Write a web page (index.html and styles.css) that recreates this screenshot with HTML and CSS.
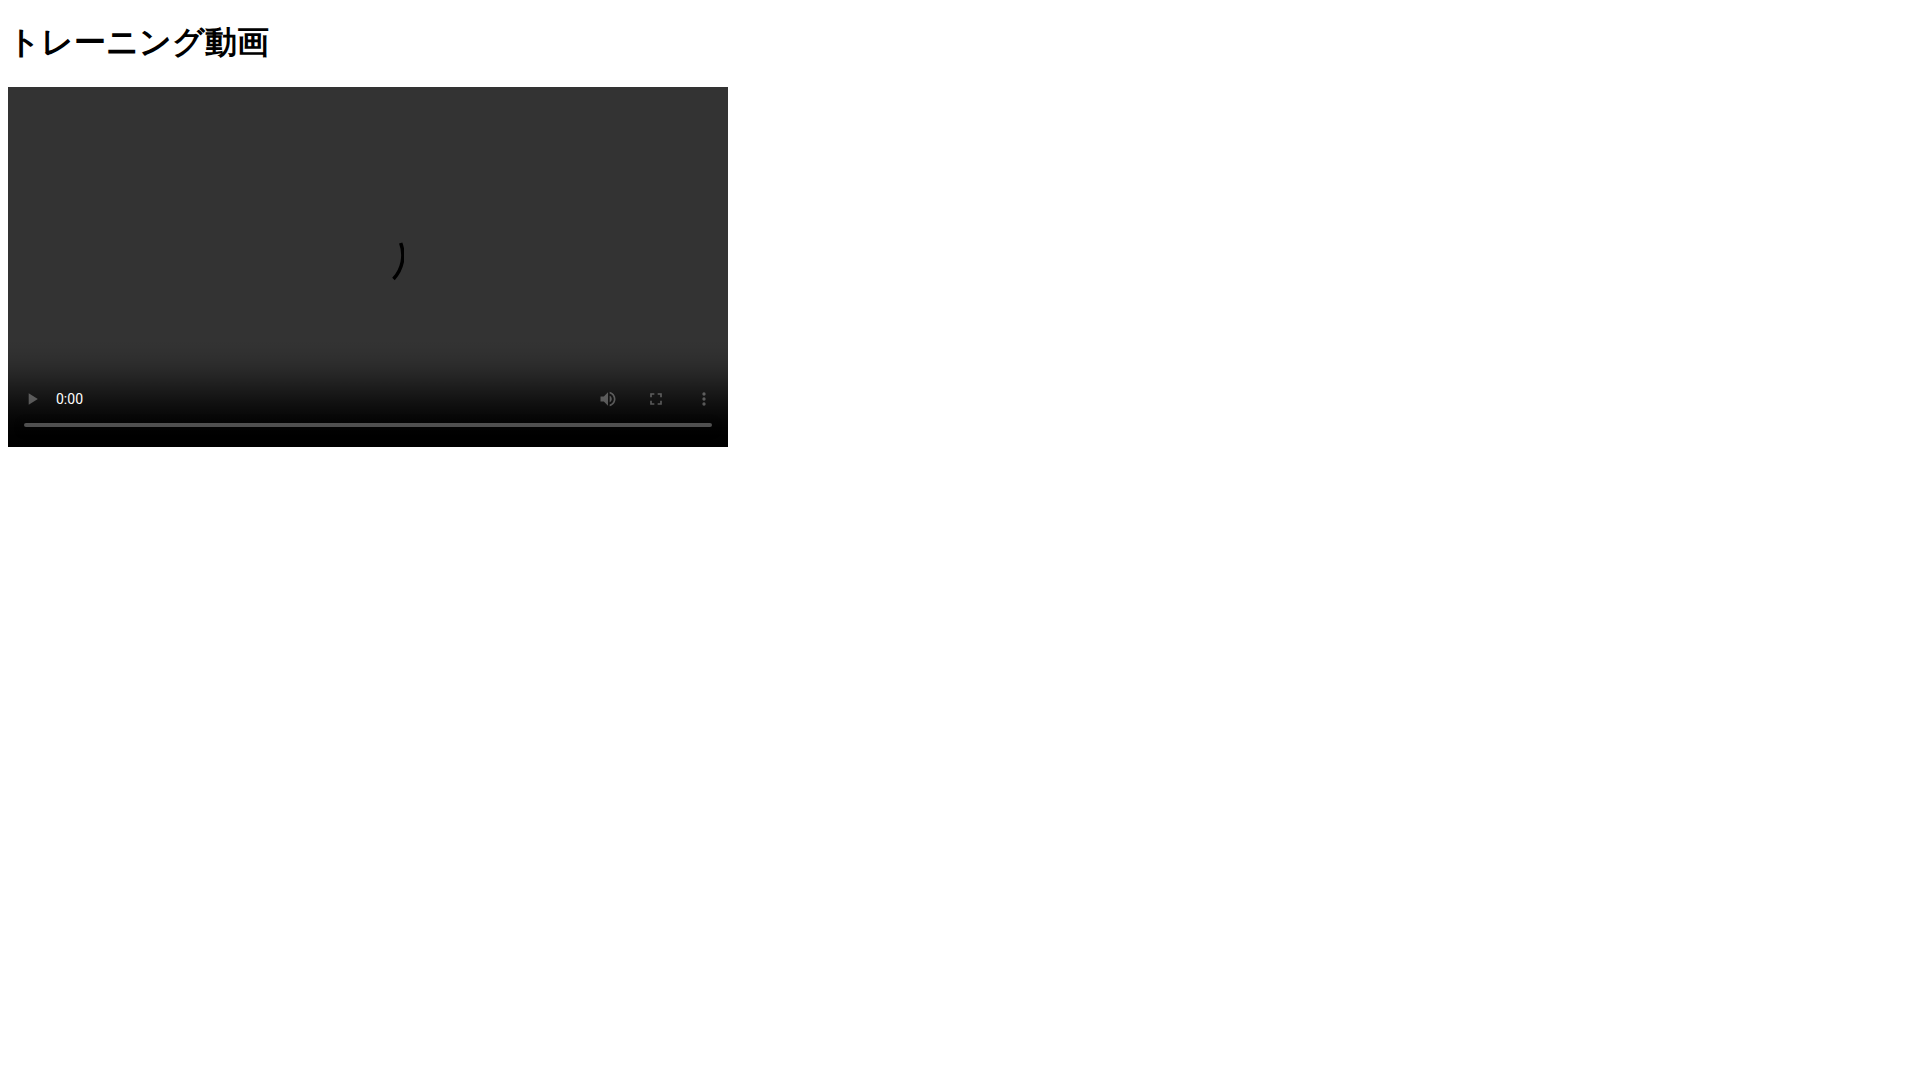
FILE: index.html
```
<!DOCTYPE html>
<html lang="ja">
<head>
  <meta charset="UTF-8">
  <title>トレーニング動画</title>
  <link rel="stylesheet" href="styles.css">
</head>
<body>

  <h1>トレーニング動画</h1>

  <div class="player">
    <video class="video" controls>
      <source src="training.mp4" type="video/mp4">
    </video>
    <!-- loading spinner -->
    <svg class="spinner" viewBox="0 0 72 72" aria-hidden="true">
      <path d="M68.700 24 A35 35 0 0 1 61.500 60" fill="none" stroke="#000" stroke-width="3.500"/>
    </svg>
  </div>

</body>
</html>
```

FILE: styles.css
```
body {
  font-family: "Liberation Serif", serif;
  margin: 0 8px 8px;
}
.player {
  position: relative;
  width: 720px;
  max-width: 100%;
}
.video {
  display: block;
  width: 100%;
  aspect-ratio: 2 / 1;
}
.spinner {
  position: absolute;
  top: 132px;
  left: 50%;
  width: 72px;
  margin-left: -36px;
  pointer-events: none;
}
```
